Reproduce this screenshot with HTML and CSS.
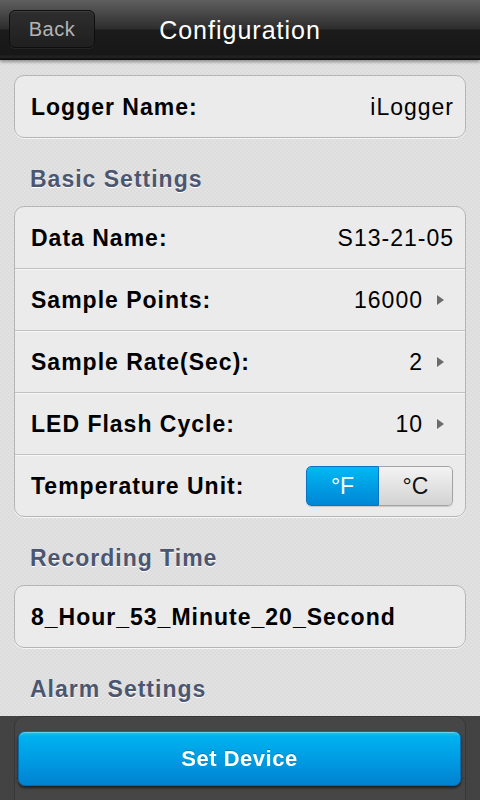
FILE: index.html
```html
<!DOCTYPE html>
<html lang="en">
<head>
    <meta charset="UTF-8">
    <meta name="viewport" content="width=device-width, initial-scale=1.0">
    <title>Configuration</title>
    <link rel="stylesheet" href="styles.css">
</head>
<body>
    <header class="navbar">
        <button class="back-btn">Back</button>
        <h1 class="title">Configuration</h1>
    </header>

    <main class="content">
        <div class="card">
            <div class="row">
                <span class="label">Logger Name:</span>
                <span class="value">iLogger</span>
            </div>
        </div>

        <h2 class="section-title">Basic Settings</h2>
        <div class="card">
            <div class="row">
                <span class="label">Data Name:</span>
                <span class="value">S13-21-05</span>
            </div>
            <div class="row">
                <span class="label">Sample Points:</span>
                <span class="value">16000</span>
                <svg class="arrow" width="7" height="10" viewBox="0 0 7 10"><polygon points="0,0 7,5 0,10"/></svg>
            </div>
            <div class="row">
                <span class="label">Sample Rate(Sec):</span>
                <span class="value">2</span>
                <svg class="arrow" width="7" height="10" viewBox="0 0 7 10"><polygon points="0,0 7,5 0,10"/></svg>
            </div>
            <div class="row">
                <span class="label">LED Flash Cycle:</span>
                <span class="value">10</span>
                <svg class="arrow" width="7" height="10" viewBox="0 0 7 10"><polygon points="0,0 7,5 0,10"/></svg>
            </div>
            <div class="row">
                <span class="label">Temperature Unit:</span>
                <div class="segmented">
                    <span class="segment active">°F</span>
                    <span class="segment">°C</span>
                </div>
            </div>
        </div>

        <h2 class="section-title">Recording Time</h2>
        <div class="card">
            <div class="row">
                <span class="label">8_Hour_53_Minute_20_Second</span>
            </div>
        </div>

        <h2 class="section-title">Alarm Settings</h2>
        <div class="card">
            <div class="row"></div>
            <div class="row">
                <span class="label">Humidity Alarm:</span>
            </div>
        </div>
    </main>

    <div class="bottom-bar">
        <button class="set-btn">Set Device</button>
    </div>
</body>
</html>
```

FILE: styles.css
```css
html, body {
    margin: 0;
    height: 100%;
}

body {
    width: 480px;
    height: 800px;
    overflow: hidden;
    font-family: "Liberation Sans", Arial, sans-serif;
    background-color: #dfdfdf;
    background-image: repeating-conic-gradient(#e2e2e2 0 25%, #dcdcdc 0 50%);
    background-size: 4px 4px;
    color: #000;
}

/* top navigation */
.navbar {
    position: relative;
    z-index: 2;
    height: 60px;
    box-sizing: border-box;
    padding: 10px 9px 0;
    display: grid;
    grid-template-columns: 1fr auto 1fr;
    align-items: start;
    background: linear-gradient(#5f5f5f 0, #3c3c3c 20px, #2d2d2d 29px, #1b1b1b 30px, #171717 55px, #222 56px, #1e1e1e 58px, #0c0c0c 59px);
    box-shadow: 0 2px 3px rgba(0, 0, 0, 0.35);
}

.back-btn {
    justify-self: start;
    width: 86px;
    height: 38px;
    padding: 1px 0 0;
    border: 1px solid #0e0e0e;
    border-radius: 6px;
    background: linear-gradient(#2e2e2e, #1f1f1f);
    box-shadow: inset 0 1px 0 rgba(255, 255, 255, 0.08), 0 1px 0 rgba(255, 255, 255, 0.06);
    color: #b4b4b4;
    font-family: inherit;
    font-size: 20px;
    letter-spacing: 0.5px;
}

.title {
    margin: 0;
    padding-top: 1px;
    font-size: 25px;
    font-weight: normal;
    line-height: 38px;
    letter-spacing: 1px;
    color: #fff;
}

/* main list */
.content {
    padding: 15px 14px 0;
}

.card {
    background: #ebebeb;
    border: 1px solid #b5b5b5;
    border-radius: 10px;
    box-shadow: 0 1px 0 rgba(255, 255, 255, 0.7);
    overflow: hidden;
}

.row {
    height: 61px;
    display: flex;
    align-items: center;
    padding: 0 11px 0 16px;
    font-size: 23px;
    line-height: 26px;
    letter-spacing: 1px;
}

.row + .row {
    border-top: 1px solid #c1c1c1;
    box-shadow: inset 0 1px 0 #f7f7f7;
}

.label {
    flex: 1;
    font-weight: bold;
}

.value {
    font-weight: normal;
}

.arrow {
    fill: #6b6b6b;
    margin: 0 10px 0 14px;
}

.section-title {
    margin: 0;
    padding: 28px 0 14px 16px;
    font-size: 23px;
    line-height: 26px;
    letter-spacing: 1px;
    color: #4b5670;
    text-shadow: 0 1px 0 #fff;
}

/* unit switch */
.segmented {
    display: flex;
    height: 40px;
    margin-right: 1px;
    border-radius: 5px;
    overflow: hidden;
    box-shadow: 0 1px 1px rgba(0, 0, 0, 0.15);
}

.segment {
    width: 74px;
    box-sizing: border-box;
    display: flex;
    align-items: center;
    justify-content: center;
    font-size: 23px;
    letter-spacing: 0;
    border: 1px solid #a3a3a3;
    border-left: none;
    background: linear-gradient(#f3f3f3, #d3d3d3);
    color: #111;
}

.segment.active {
    width: 73px;
    border: 1px solid #0a74c2;
    border-radius: 5px 0 0 5px;
    background: linear-gradient(#00baf2, #009ee4 50%, #0086d6);
    color: #fff;
}

.segment:last-child {
    border-radius: 0 5px 5px 0;
}

/* bottom action bar */
.bottom-bar {
    position: fixed;
    left: 0;
    right: 0;
    bottom: 0;
    height: 84px;
    box-sizing: border-box;
    padding: 15px 19px 0 18px;
    background: rgba(0, 0, 0, 0.7);
}

.set-btn {
    display: block;
    width: 100%;
    height: 55px;
    border: 1px solid #0569ac;
    border-radius: 7px;
    background: linear-gradient(#1cc4f6, #00b2ee 8%, #009ae2 55%, #0082cf);
    box-shadow: inset 0 1px 0 rgba(255, 255, 255, 0.3), 0 2px 3px rgba(0, 0, 0, 0.6);
    color: #fff;
    font-family: inherit;
    font-size: 22px;
    font-weight: bold;
    letter-spacing: 0.5px;
    text-shadow: 0 -1px 0 rgba(0, 0, 0, 0.2);
}
```
